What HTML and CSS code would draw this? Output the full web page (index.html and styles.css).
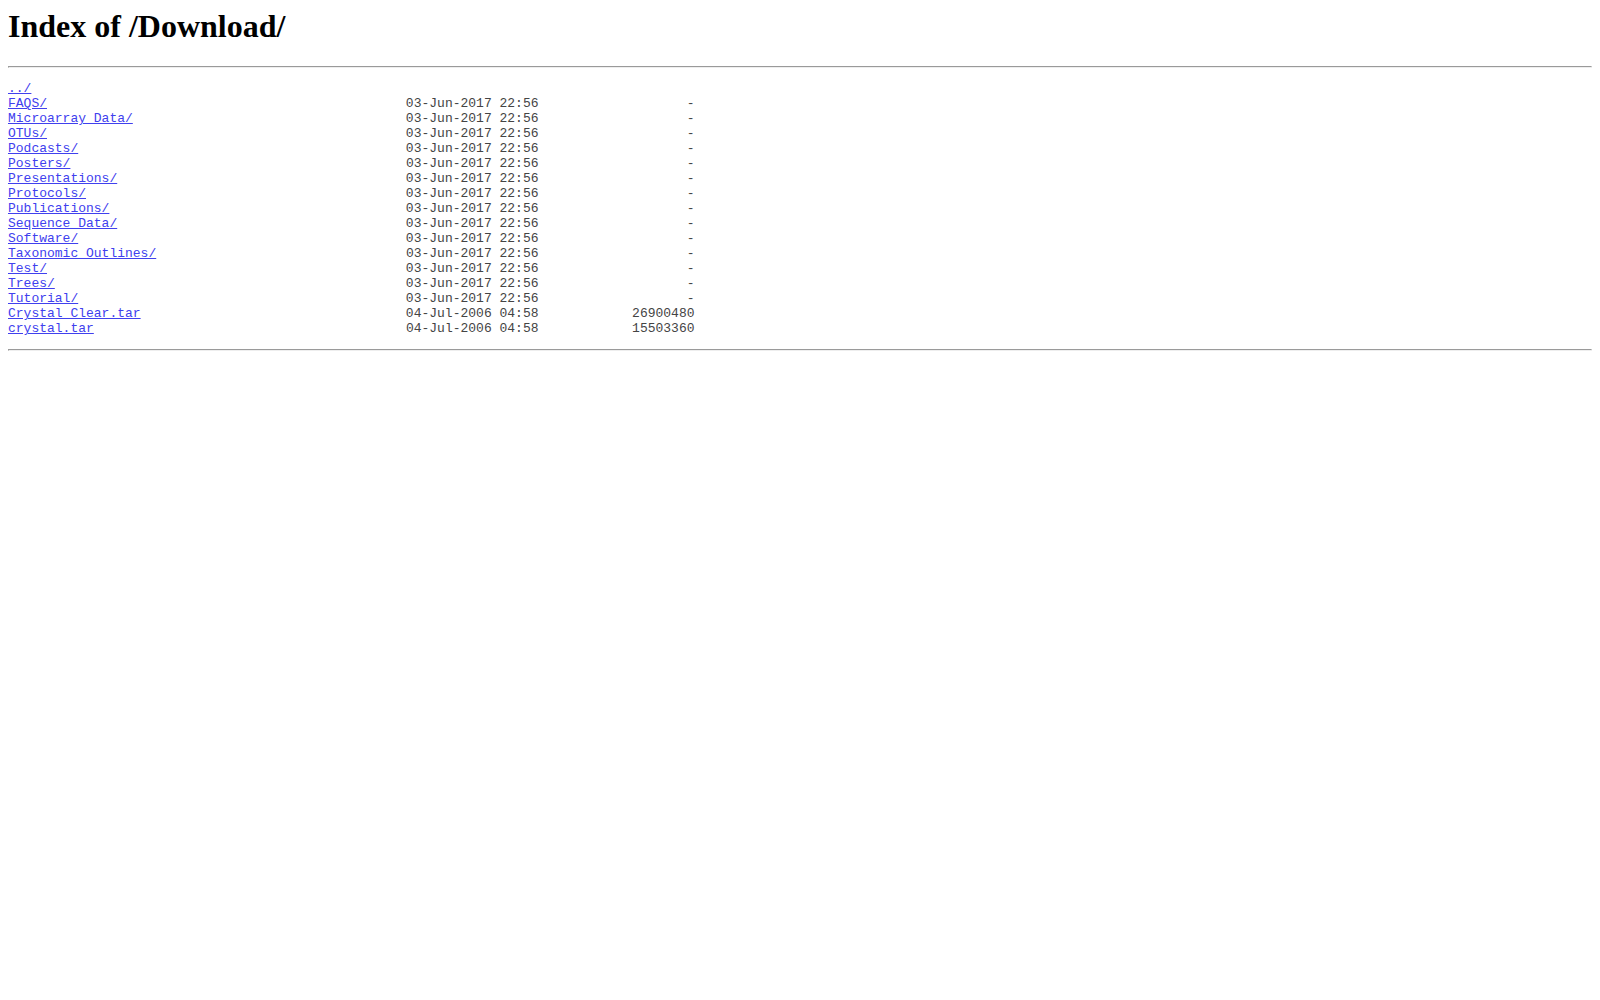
FILE: index.html
```html
<!DOCTYPE html>
<html>
<head>
<meta charset="utf-8">
<title>Index of /Download/</title>
<link rel="stylesheet" href="styles.css">
</head>
<body class="page">
<h1 class="title">Index of /Download/</h1><hr class="rule"><pre class="listing"><a href="../">../</a>
<a href="FAQS/">FAQS/</a>                                              03-Jun-2017 22:56                   -
<a href="Microarray_Data/">Microarray_Data/</a>                                   03-Jun-2017 22:56                   -
<a href="OTUs/">OTUs/</a>                                              03-Jun-2017 22:56                   -
<a href="Podcasts/">Podcasts/</a>                                          03-Jun-2017 22:56                   -
<a href="Posters/">Posters/</a>                                           03-Jun-2017 22:56                   -
<a href="Presentations/">Presentations/</a>                                     03-Jun-2017 22:56                   -
<a href="Protocols/">Protocols/</a>                                         03-Jun-2017 22:56                   -
<a href="Publications/">Publications/</a>                                      03-Jun-2017 22:56                   -
<a href="Sequence_Data/">Sequence_Data/</a>                                     03-Jun-2017 22:56                   -
<a href="Software/">Software/</a>                                          03-Jun-2017 22:56                   -
<a href="Taxonomic_Outlines/">Taxonomic_Outlines/</a>                                03-Jun-2017 22:56                   -
<a href="Test/">Test/</a>                                              03-Jun-2017 22:56                   -
<a href="Trees/">Trees/</a>                                             03-Jun-2017 22:56                   -
<a href="Tutorial/">Tutorial/</a>                                          03-Jun-2017 22:56                   -
<a href="Crystal_Clear.tar">Crystal_Clear.tar</a>                                  04-Jul-2006 04:58            26900480
<a href="crystal.tar">crystal.tar</a>                                        04-Jul-2006 04:58            15503360
</pre><hr class="rule">
</body>
</html>
```

FILE: styles.css
```css
.page {
  margin: 8px;
  font-family: "Liberation Serif", serif;
  background: #fff;
  color: #000;
}
.title {
  font-size: 2em;
  font-weight: bold;
  margin: 0 0 0.67em;
}
.listing {
  font-family: "Liberation Mono", monospace;
  font-size: 13px;
  margin: 13px 0;
  color: #444;
}
.listing a {
  color: #4040ee;
}
.rule {
  margin: 8px 0;
}
```
